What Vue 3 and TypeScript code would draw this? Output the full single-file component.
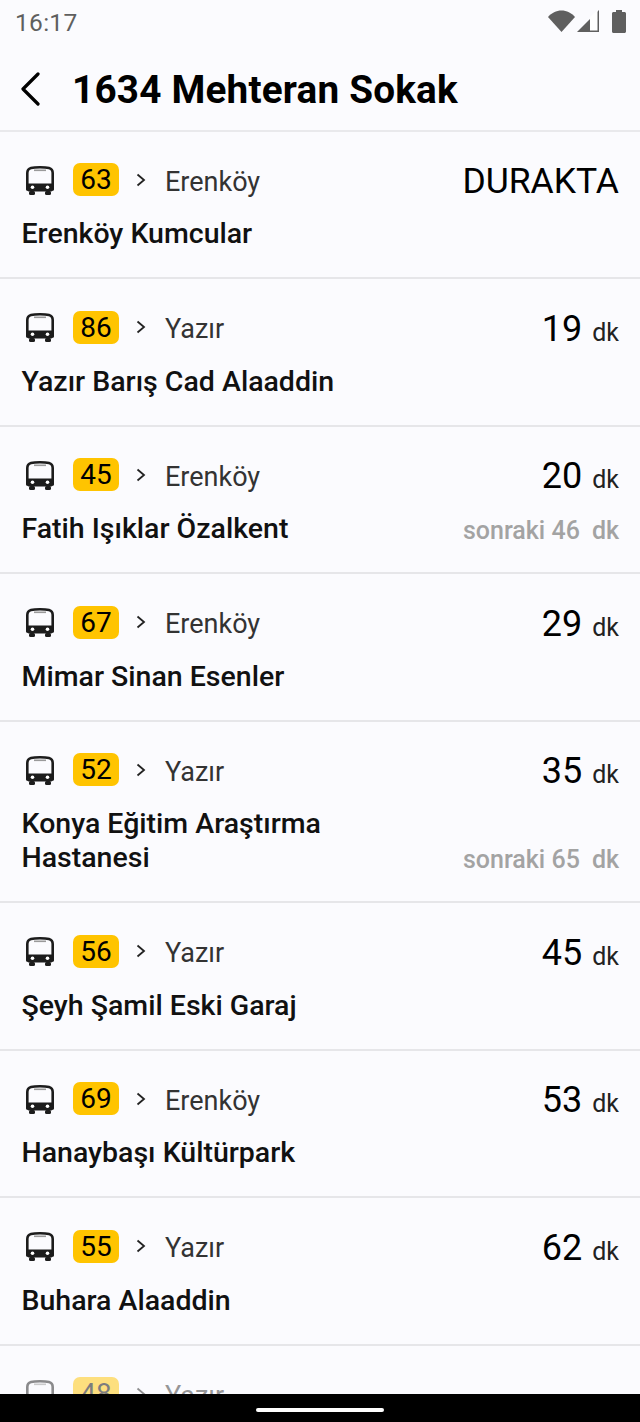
<template>
  <div class="screen">
    <div class="status">
      <span class="clock">16:17</span>
      <div class="status-icons">
        <svg width="27" height="22" viewBox="0 0 27 22"><path d="M0 7C3.500 3 8.300 .5 13.500 .5S23.500 3 27 7L13.500 22z" fill="#5f5f5f" /></svg>
        <svg width="22" height="22" viewBox="0 0 22 22"><path d="M0 22 22 0v22z" fill="#5f5f5f" /><path d="M13 20.500V7l7.500-7v20.500z" fill="#fff" /></svg>
        <svg width="14" height="23" viewBox="0 0 14 23"><path d="M4 2V0h6v2h2.500c.8 0 1.500.7 1.500 1.500V21.500c0 .8-.7 1.500-1.500 1.500h-11C.7 23 0 22.300 0 21.500V3.500C0 2.700.7 2 1.500 2z" fill="#5f5f5f" /></svg>
      </div>
    </div>
    <header class="topbar">
      <svg class="back" width="24" height="34" viewBox="0 0 24 34"><path d="M20 2 5 17l15 15" fill="none" stroke="#000" stroke-width="3.200" stroke-linecap="round" stroke-linejoin="round" /></svg>
      <h1>1634 Mehteran Sokak</h1>
    </header>
    <div class="list">
      <div v-for="r in rows" :key="r.no" class="row" :class="{ faded: r.no === '48' }">
        <div class="line">
          <svg class="bus" width="32" height="32" viewBox="0 0 32 32">
            <path d="M3.300 8c0-2.800 1.200-4.300 3.700-5C11 2 21 2 25 3c2.500.7 3.700 2.200 3.700 5v16.500H3.300z" fill="none" stroke="#1c1c1c" stroke-width="2.600" stroke-linejoin="round" />
            <path d="M10 5.300h12" stroke="#9a9a9a" stroke-width="1.600" />
            <path d="M3.300 18.500h25.400v6.300c0 1-.6 1.700-1.500 1.700H4.800c-.9 0-1.500-.7-1.500-1.700z" fill="#1c1c1c" />
            <rect x="5" y="26" width="6" height="4" rx="1.500" fill="#1c1c1c" />
            <rect x="21" y="26" width="6" height="4" rx="1.500" fill="#1c1c1c" />
            <circle cx="8.500" cy="22.300" r="1.800" fill="#fff" />
            <circle cx="23.500" cy="22.300" r="1.800" fill="#fff" />
          </svg>
          <span class="badge">{{ r.no }}</span>
          <svg class="chev" width="12" height="16" viewBox="0 0 12 16"><path d="M2.500 2.500 9 8l-6.500 5.500" fill="none" stroke="#222" stroke-width="1.800" /></svg>
          <span class="dest">{{ r.dest }}</span>
          <span v-if="r.at" class="at">DURAKTA</span>
          <span v-else-if="r.min" class="time"><b>{{ r.min }}</b><i>dk</i></span>
        </div>
        <div class="line2">
          <span class="name">{{ r.name }}</span>
          <span v-if="r.next" class="next">sonraki {{ r.next }}<em>dk</em></span>
        </div>
      </div>
    </div>
    <div class="navbar"><span class="pill"></span></div>
  </div>
</template>

<script setup lang="ts">
interface Row {
  no: string
  dest: string
  name: string
  min?: number
  next?: number
  at?: boolean
}

const rows: Row[] = [
  { no: '63', dest: 'Erenköy', name: 'Erenköy Kumcular', at: true },
  { no: '86', dest: 'Yazır', name: 'Yazır Barış Cad Alaaddin', min: 19 },
  { no: '45', dest: 'Erenköy', name: 'Fatih Işıklar Özalkent', min: 20, next: 46 },
  { no: '67', dest: 'Erenköy', name: 'Mimar Sinan Esenler', min: 29 },
  { no: '52', dest: 'Yazır', name: 'Konya Eğitim Araştırma Hastanesi', min: 35, next: 65 },
  { no: '56', dest: 'Yazır', name: 'Şeyh Şamil Eski Garaj', min: 45 },
  { no: '69', dest: 'Erenköy', name: 'Hanaybaşı Kültürpark', min: 53 },
  { no: '55', dest: 'Yazır', name: 'Buhara Alaaddin', min: 62 },
  { no: '48', dest: 'Yazır', name: '' }
]
</script>

<style>
html, body { margin: 0; background: #fbfbfe; }
</style>

<style scoped>
.screen { position: relative; width: 640px; height: 1422px; overflow: hidden; background: #fbfbfe; font-family: Roboto, "Noto Sans", sans-serif; color: #000; }
.status { height: 44px; display: flex; align-items: center; justify-content: space-between; padding: 0 14px 0 15px; }
.clock { font-size: 24.500px; color: #5f5f5f; letter-spacing: .3px; }
.status-icons { display: flex; align-items: center; gap: 2px; margin-top: -2px; }
.status-icons svg + svg + svg { margin-left: 11px; }
.topbar { height: 85.500px; display: flex; align-items: center; border-bottom: 2px solid #e9e9ec; }
.back { margin-left: 18px; margin-top: 4px; }
h1 { margin: 6px 0 0 30px; font-size: 38.700px; font-weight: 700; letter-spacing: .2px; }
.row { box-sizing: border-box; min-height: 147.500px; padding: 30.500px 21px 0 22px; border-bottom: 2px solid #e6e6e9; }
.line { display: flex; align-items: center; height: 38px; }
.bus { margin-left: 2px; margin-top: -1px; }
.badge { margin-left: 17px; margin-top: -3px; width: 46px; height: 33px; border-radius: 7px; background: #ffc400; font-size: 28px; display: flex; align-items: center; justify-content: center; color: #000; }
.chev { margin-left: 16px; margin-top: -3px; }
.dest { margin-left: 18px; font-size: 27px; color: #333; margin-top: 1px; }
.at { margin-left: auto; font-size: 35.500px; color: #000; }
.time { margin-left: auto; display: flex; align-items: baseline; }
.time b { font-weight: 400; font-size: 36px; color: #000; }
.time i { font-style: normal; font-size: 25px; margin-left: 10px; color: #222; }
.line2 { display: flex; justify-content: space-between; align-items: flex-end; margin-top: 17px; padding-bottom: 26px; }
.name { margin-left: -.5px; font-size: 28.500px; font-weight: 500; line-height: 34px; color: #111; max-width: 340px; }
.next { font-size: 25px; font-weight: 500; color: #a3a3a3; line-height: 34px; white-space: nowrap; margin-bottom: -2px; }
.next em { font-style: normal; margin-left: 12px; }
.faded { opacity: .5; }
.navbar { position: absolute; left: 0; right: 0; bottom: 0; height: 28px; background: #000; display: flex; justify-content: center; align-items: center; }
.pill { width: 128px; height: 4px; border-radius: 2px; background: #fff; margin-top: 4px; }
</style>
